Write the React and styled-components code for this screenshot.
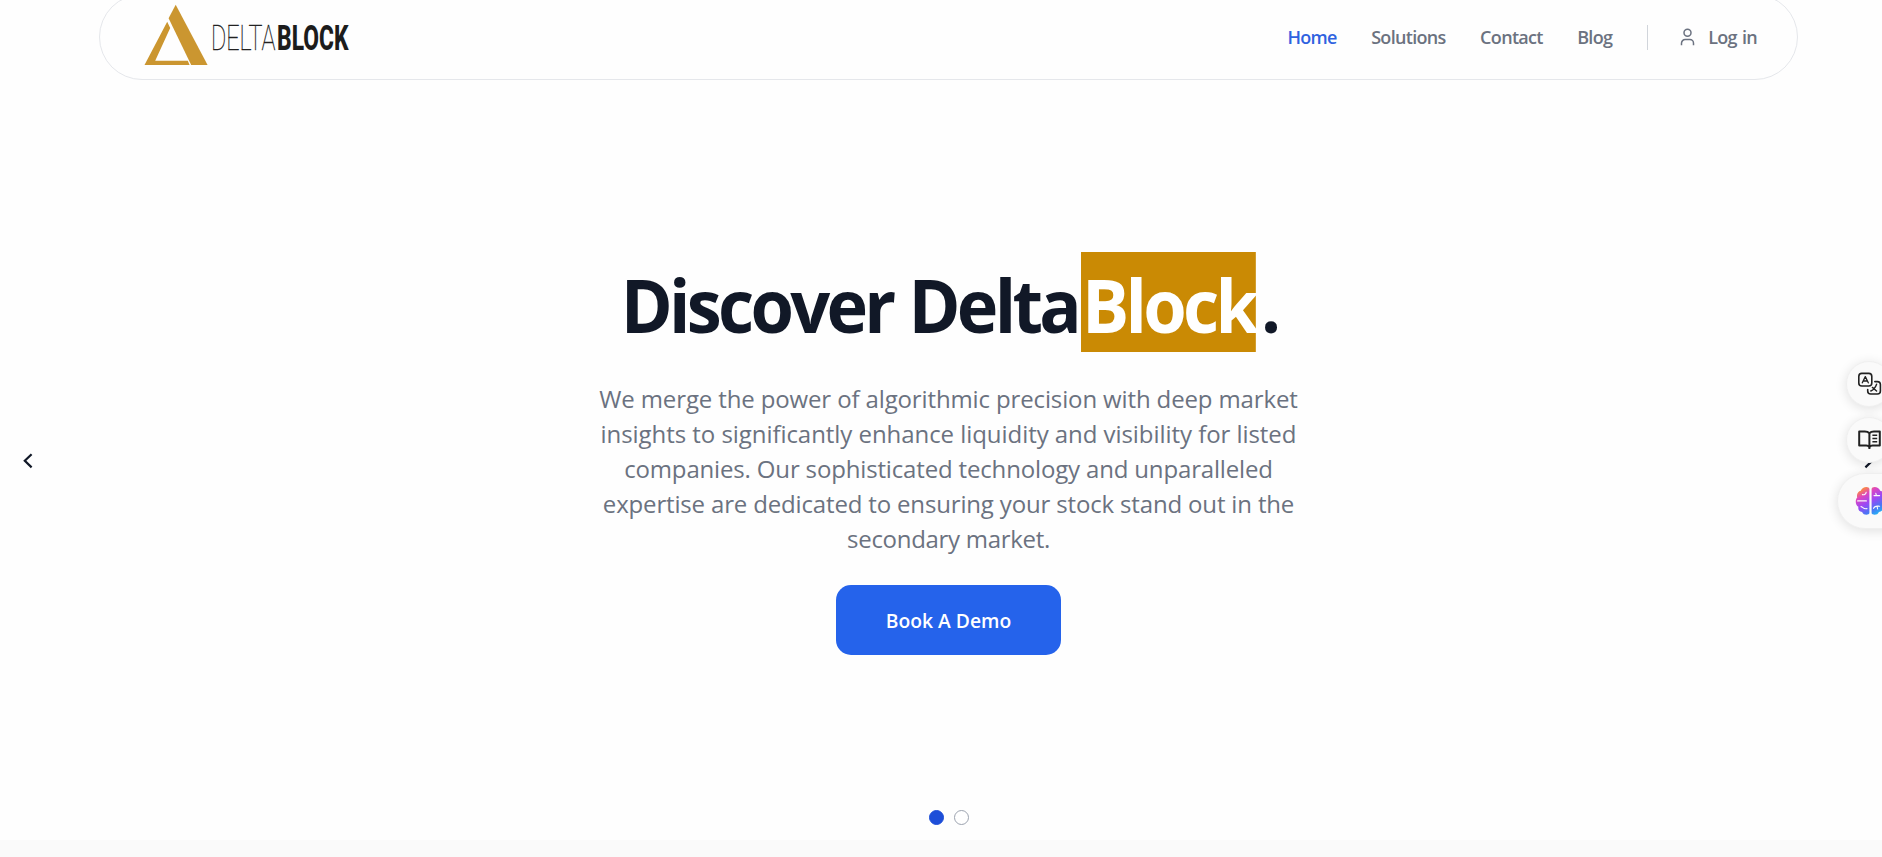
import React, {useState} from 'react';
import styled, {createGlobalStyle} from 'styled-components';


const GlobalStyle = createGlobalStyle`
    body{
        margin: 0;
        background: #fefefe;
        font-family: 'Open Sans', 'Noto Sans', sans-serif;
        overflow: hidden;
    }
`;

const Page = styled.div`
    width: 1897px;
    height: 857px;
    display: flex;
    flex-direction: column;
    overflow: hidden;
`;

const Header = styled.header`
    box-sizing: border-box;
    width: 1699px;
    height: 86px;
    flex-shrink: 0;
    margin: -6px auto 0;
    padding: 0 40px 0 44px;
    display: flex;
    align-items: center;
    justify-content: space-between;
    border: 1px solid #e5e7eb;
    border-radius: 43px;
`;

const Nav = styled.nav`
    display: flex;
    align-items: center;
`;

const NavLink = styled.a`
    margin-right: 34.4px;
    font-size: 18px;
    font-weight: 600;
    letter-spacing: -0.68px;
    word-spacing: 1px;
    line-height: 26px;
    color: ${({ $active }) => ($active ? "#2f62e0" : "#6b7280")};
    cursor: pointer;
`;

const Divider = styled.span`
    width: 1px;
    height: 25px;
    background: #d1d5db;
`;

const Login = styled(NavLink)`
    display: flex;
    align-items: center;
    gap: 13px;
    margin: 0 0 0 32.5px;
`;

const Hero = styled.section`
    height: 760px;
    flex-shrink: 0;
    display: grid;
    grid-template-columns: 56px 1fr 56px;
    align-items: center;
`;

const Arrow = styled.button`
    width: 56px;
    height: 56px;
    padding: 1px 1px 0 0;
    display: flex;
    align-items: center;
    justify-content: center;
    background: none;
    border: none;
    color: #111827;
`;

const Slide = styled.div`
    box-sizing: border-box;
    height: 100%;
    padding: 172px 0 15px;
    display: flex;
    flex-direction: column;
    align-items: center;
`;

const Title = styled.h1`
    width: 692.6px;
    height: 100px;
    margin: 0;
    display: flex;
    font-size: 74px;
    font-weight: 700;
    letter-spacing: -3.9px;
    color: #111827;
    white-space: nowrap;
    transform: scaleX(0.95);
`;

const TitleText = styled.span`
    box-sizing: border-box;
    width: ${({ $width }) => $width};
    padding: 4.6px 0 0 1.4px;
    line-height: 95.4px;
    word-spacing: 1.5px;
`;

const Highlight = styled(TitleText)`
    margin-right: 4.2px;
    background: #ca8a04;
    color: #fff;
`;

const Lead = styled.p`
    margin: 29px 0;
    font-size: 24px;
    line-height: 35px;
    text-align: center;
    color: #6b7280;
`;

const Line = styled.span`
    display: block;
    letter-spacing: ${({ $spacing }) => $spacing}px;
`;

const DemoButton = styled.button`
    width: 225px;
    height: 70px;
    padding: 1px 0 0;
    border: none;
    border-radius: 15px;
    background: #2563eb;
    color: #fff;
    font-family: inherit;
    font-size: 19.3px;
    font-weight: 600;
`;

const Dots = styled.div`
    margin-top: auto;
    display: flex;
    gap: 10px;
`;

const Dot = styled.button`
    box-sizing: border-box;
    width: 15px;
    height: 15px;
    padding: 0;
    border: 1px solid ${({ $active }) => ($active ? "#1d4ed8" : "#9ca3af")};
    border-radius: 50%;
    background: ${({ $active }) => ($active ? "#1d4ed8" : "#fff")};
`;

const NextSection = styled.div`
    flex: 1;
    background: #fafafa;
`;

// floating tools, pinned over the right edge of the page
const Tools = styled.aside`
    position: fixed;
    top: 361px;
    left: 1837px;
    display: flex;
    flex-direction: column;
`;

const Tool = styled.div`
    box-sizing: border-box;
    width: 46px;
    height: 46px;
    margin: 0 0 10px 9px;
    padding-left: 11px;
    display: flex;
    align-items: center;
    background: #fafafa;
    border: 1px solid #efefef;
    border-radius: 23px;
    box-shadow: 0 2px 12px rgba(0, 0, 0, 0.12);
`;

const BrainTool = styled(Tool)`
    width: 80px;
    height: 56px;
    margin: 0;
    padding-left: 17px;
    border-radius: 28px;
`;

const LogoSvg = styled.svg`
    overflow: visible;
    font-family: Roboto, sans-serif;
    font-size: 35.6px;
`;


const Logo = () => (
    <LogoSvg width="206" height="66" viewBox="0 0 206 66">
        <path d="M31.7 .7 63.6 61H47.2L24.6 14.2Z" fill="#cb9630" />
        <path d="M23.2 17.8 26.2 24 11.2 56.7H43.8L45.6 61H.5Z" fill="#cb9630" />
        <text x="67" y="46" fontWeight="100" fill="#222" stroke="#222" strokeWidth=".35" textLength="64.5" lengthAdjust="spacingAndGlyphs">DELTA</text>
        <text x="133" y="46" fontWeight="800" fill="#1c1c1c" textLength="71.5" lengthAdjust="spacingAndGlyphs">BLOCK</text>
    </LogoSvg>
);

const UserIcon = () => (
    <svg width="15" height="18" viewBox="0 0 15 18" fill="none" stroke="#6b7280" strokeWidth="1.5">
        <circle cx="7.5" cy="4.8" r="3.5" />
        <path d="M1.5 17.2V15.2A3.6 3.6 0 0 1 5.1 11.6H9.9A3.6 3.6 0 0 1 13.5 15.2V17.2" />
    </svg>
);

const Chevron = ({ d }) => (
    <svg width="10" height="16" viewBox="0 0 10 16" fill="none" stroke="currentColor" strokeWidth="2.2">
        <path d={d} />
    </svg>
);

const TranslateIcon = () => (
    <svg width="24" height="24" viewBox="0 0 24 24" fill="none" stroke="#222" strokeWidth="1.6" strokeLinecap="round" strokeLinejoin="round">
        <rect x=".8" y="1.4" width="13" height="12.6" rx="3" />
        <path d="M4.3 10.8 7.3 4.6 10.3 10.8M5.2 9H9.4" strokeWidth="1.3" />
        <path d="M16.8 9.6H19.4A3 3 0 0 1 22.4 12.6V19A3 3 0 0 1 19.4 22H12.7A3 3 0 0 1 9.7 19V17.6" />
        <path d="M18.6 12.2C17.4 15.6 15.6 17.8 12.8 19M14.4 15.4 18.6 19" strokeWidth="1.4" />
    </svg>
);

const BookIcon = () => (
    <svg width="24" height="20" viewBox="0 0 24 20" fill="none" stroke="#222" strokeWidth="2" strokeLinejoin="round">
        <path d="M11.4 3.2C10.3 2 8.7 1.5 6.8 1.5H1.2V15.5H8.2C9.8 15.5 10.8 16 11.4 17.2 12 16 13 15.5 14.6 15.5H21.8V1.5H16C14.1 1.5 12.5 2 11.4 3.2V19" />
        <path d="M14.4 5.3H19.2M14.4 8.5H19.2M14.4 11.7H19.2" strokeWidth="1.6" />
    </svg>
);

const BrainIcon = () => (
    <svg width="31" height="30" viewBox="0 0 31 30">
        <defs>
            <linearGradient id="brain" x1="5" y1="0" x2="22" y2="29" gradientUnits="userSpaceOnUse">
                <stop offset="0" stopColor="#ff9a3c" />
                <stop offset=".12" stopColor="#f9844a" />
                <stop offset=".3" stopColor="#dd45c0" />
                <stop offset=".55" stopColor="#9c48f4" />
                <stop offset=".8" stopColor="#4b74f5" />
                <stop offset="1" stopColor="#20b8f5" />
            </linearGradient>
        </defs>
        <g fill="url(#brain)">
            <path d="M14.4 3V27C14.4 29 8.6 30 7.1 26 4 26 2.8 23.4 3.4 20.8 .4 19.3-.1 14 2.2 11.6 1.3 8.4 3.1 5.2 5.8 4.8 7 .2 14.4-.2 14.4 3Z" />
            <path d="M16.6 3V27C16.6 29 22.4 30 23.9 26 27 26 28.2 23.4 27.6 20.8 30.6 19.3 31.1 14 28.8 11.6 29.7 8.4 27.9 5.2 25.2 4.8 24 .2 16.6-.2 16.6 3Z" />
        </g>
        <g fill="none" stroke="#fafafa" strokeWidth="1.1" strokeLinecap="round">
            <path d="M11.2 6.2C10.8 8.6 8.8 9 7.4 8.6M2.6 14.9H11.4M6 20.6C7.4 20.4 8.2 23.4 12 22.6" />
            <path d="M19 9.6H24.6M21.4 9.5 20.8 7.3M18.6 22.4C19.4 19.4 22 20.2 24.6 20.2M22 20.2 22.6 23" />
        </g>
    </svg>
);


const links = ["Home", "Solutions", "Contact", "Blog"];

const lead = [
    { text: "We merge the power of algorithmic precision with deep market", spacing: -0.13 },
    { text: "insights to significantly enhance liquidity and visibility for listed", spacing: -0.055 },
    { text: "companies. Our sophisticated technology and unparalleled", spacing: -0.16 },
    { text: "expertise are dedicated to ensuring your stock stand out in the", spacing: -0.16 },
    { text: "secondary market.", spacing: -0.3 },
];

const App = () => {

    const [slide, setSlide] = useState(0);

    return (
        <>
        <GlobalStyle />
        <Page>
            <Header>
                <Logo />
                <Nav>
                    {links.map((link) => <NavLink key={link} $active={link === "Home"}>{link}</NavLink>)}
                    <Divider />
                    <Login><UserIcon />Log in</Login>
                </Nav>
            </Header>
            <Hero>
                <Arrow aria-label="Previous" onClick={() => setSlide(0)}><Chevron d="M8.6 1.2 1.8 7.8 8.6 14.4" /></Arrow>
                <Slide>
                    <Title>
                        <TitleText $width="485.8px">Discover Delta</TitleText>
                        <Highlight $width="184.2px">Block</Highlight>
                        <TitleText>.</TitleText>
                    </Title>
                    <Lead>
                        {lead.map(({ text, spacing }) => <Line key={text} $spacing={spacing}>{text}</Line>)}
                    </Lead>
                    <DemoButton>Book A Demo</DemoButton>
                    <Dots>
                        {[0, 1].map((i) => <Dot key={i} aria-label={`Slide ${i + 1}`} $active={slide === i} onClick={() => setSlide(i)} />)}
                    </Dots>
                </Slide>
                <Arrow aria-label="Next" onClick={() => setSlide(1)}><Chevron d="M1.4 1.2 8.2 7.8 1.4 14.4" /></Arrow>
            </Hero>
            <NextSection />
        </Page>
        <Tools>
            <Tool><TranslateIcon /></Tool>
            <Tool><BookIcon /></Tool>
            <BrainTool><BrainIcon /></BrainTool>
        </Tools>
        </>
    )
};

export default App;
